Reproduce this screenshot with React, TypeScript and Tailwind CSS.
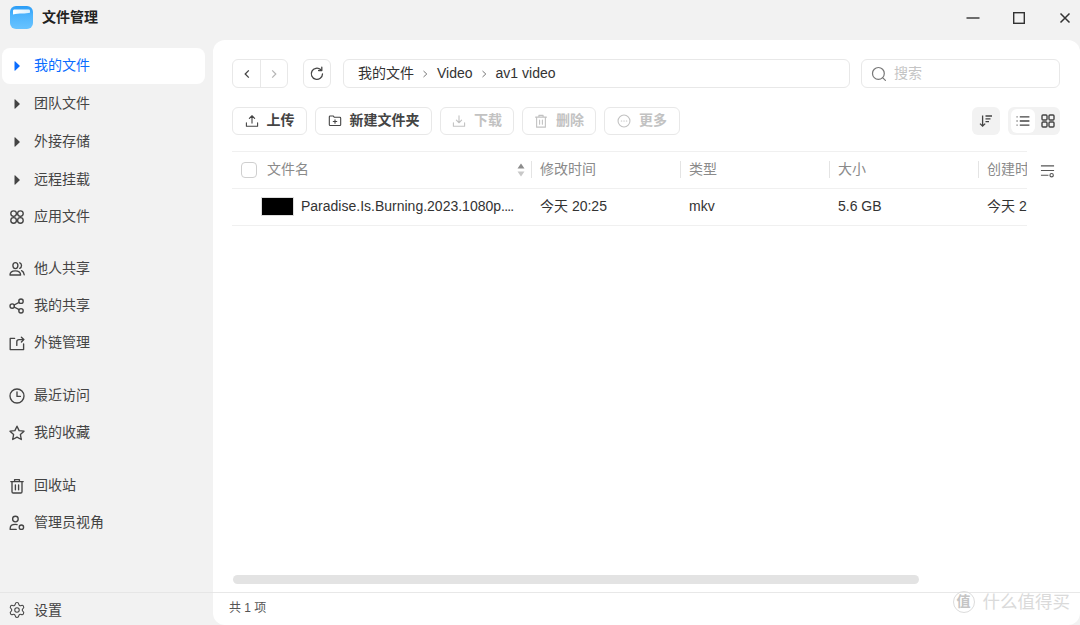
import type { ReactNode } from "react";
import { Settings } from "lucide-react";

type IconProps = { className?: string };

function Svg({ className, children, size = 16, sw = 1.35 }: IconProps & { children: ReactNode; size?: number; sw?: number }) {
  return (
    <svg
      width={size}
      height={size}
      viewBox="0 0 16 16"
      fill="none"
      stroke="currentColor"
      strokeWidth={sw}
      strokeLinecap="round"
      strokeLinejoin="round"
      className={`shrink-0 ${className ?? ""}`}
      aria-hidden
    >
      {children}
    </svg>
  );
}

const AppsIcon = () => (
  <Svg>
    <circle cx="4.6" cy="4.6" r="2.8" />
    <circle cx="11.4" cy="4.6" r="2.8" />
    <circle cx="4.6" cy="11.4" r="2.8" />
    <circle cx="11.4" cy="11.4" r="2.8" />
  </Svg>
);
const SharedIcon = () => (
  <Svg>
    <ellipse cx="6.4" cy="4.6" rx="2.5" ry="3" />
    <path d="M1 14c0-2.6 2.3-4.2 5.3-4.2S11.6 11.4 11.6 14H1Z" />
    <path d="M10.8 1.8c1.1.5 1.7 1.6 1.7 2.8s-.6 2.3-1.7 2.8" />
    <path d="M12.6 9.6c1.4.7 2.4 2.4 2.6 4.2" />
  </Svg>
);
const ShareIcon = () => (
  <Svg>
    <circle cx="12" cy="3.2" r="2.2" />
    <circle cx="3.2" cy="8" r="2.2" />
    <circle cx="12" cy="12.8" r="2.2" />
    <path d="M10.1 4.3 5.1 7M5.1 9l5 2.7" />
  </Svg>
);
const LinkIcon = () => (
  <Svg>
    <path d="M5.6 3.4H1.2v11.2h13.4V9" />
    <path d="M7.8 10.4V6.8c0-1.3.9-2.2 2.2-2.2h4.6" />
    <path d="M12.4 2.2 14.8 4.6 12.4 7" />
  </Svg>
);
const ClockIcon = () => (
  <Svg>
    <circle cx="8" cy="8" r="7" />
    <path d="M8 4v4.4h3.4" />
  </Svg>
);
const StarIcon = () => (
  <Svg>
    <path d="m8 1.2 2.1 4.4 4.9.6-3.6 3.4.9 4.9L8 12.2l-4.3 2.3.9-4.9L1 6.2l4.9-.6L8 1.2Z" />
  </Svg>
);
const TrashIcon = () => (
  <Svg>
    <path d="M1.8 3.6h12.4M5.6 3.4V1.6h4.8v1.8" />
    <path d="M3 3.6v10.2c0 .7.5 1.2 1.2 1.2h7.6c.7 0 1.2-.5 1.2-1.2V3.6" />
    <path d="M6.4 7v4.8M9.6 7v4.8" />
  </Svg>
);
const AdminIcon = () => (
  <Svg>
    <circle cx="6.4" cy="4" r="2.8" />
    <path d="M1.2 14.4v-1.2c0-2.4 2.4-3.8 5.2-3.8 .6 0 1.2 .1 1.7 .2M1.2 14.4h6" />
    <circle cx="12.4" cy="12.2" r="2.2" />
  </Svg>
);

function Caret({ className }: IconProps) {
  return (
    <svg width="6" height="10" viewBox="0 0 6 10" className={className} aria-hidden>
      <path d="M0.5 0.8v8.4a.5.5 0 0 0 .8.4l4.2-4.2a.5.5 0 0 0 0-.8L1.3.4a.5.5 0 0 0-.8.4Z" fill="currentColor" />
    </svg>
  );
}

const Chevron = () => (
  <span className="mx-[8px] text-[#777777]">
    <svg width="7" height="8" viewBox="0 0 7 8" aria-hidden>
      <path d="M1.5 1 4.8 4 1.5 7" fill="none" stroke="currentColor" strokeWidth="1" />
    </svg>
  </span>
);

function NavRow({ label, icon, caret, active }: { label: string; icon?: ReactNode; caret?: boolean; active?: boolean }) {
  return (
    <div
      className={`flex items-center pl-[10px] rounded-lg text-[14px] ${
        active ? "mt-px h-[36px] pb-px bg-white text-[#0a6cff]" : "h-[37px] text-[#444444]"
      }`}
    >
      <span className="flex w-[14px] justify-center mr-[10px] -ml-[2px] shrink-0">
        {caret ? <Caret /> : icon}
      </span>
      <span>{label}</span>
    </div>
  );
}

function ToolButton({ label, icon, disabled, w }: { label: string; icon: ReactNode; disabled?: boolean; w: string }) {
  return (
    <button
      className={`flex h-[28px] items-center justify-center gap-[8px] rounded-md border border-[#e8e8e8] pb-px text-[14px] font-semibold ${w} ${
        disabled ? "text-[#c2c2c2]" : "text-[#444444]"
      }`}
    >
      {icon}
      <span>{label}</span>
    </button>
  );
}

function HeaderCell({ label, w }: { label: string; w: string }) {
  return (
    <div className={`flex h-full items-center shrink-0 ${w}`}>
      <span className="h-[17px] w-px shrink-0 bg-[#e4e4e4]" />
      <span className="ml-[8px] whitespace-nowrap">{label}</span>
    </div>
  );
}

export default function App() {
  return (
    <div className="relative flex h-[625px] w-[1080px] flex-col overflow-hidden bg-[#f2f2f2] font-['Liberation_Sans','Noto_Sans_CJK_SC',sans-serif] text-[#333333]">
      <div className="flex h-[40px] shrink-0 items-center">
        <svg width="23" height="23" viewBox="0 0 23 23" className="ml-[10px] mt-[-5px]" aria-hidden>
          <defs>
            <linearGradient id="folderBlue" x1="0" y1="0" x2="0" y2="1">
              <stop offset="0" stopColor="#2a9cf6" />
              <stop offset="0.4" stopColor="#4db4fd" />
              <stop offset="1" stopColor="#68c3ff" />
            </linearGradient>
            <linearGradient id="folderTop" x1="0" y1="0" x2="1" y2="0">
              <stop offset="0" stopColor="#ffffff" />
              <stop offset="1" stopColor="#d8effe" />
            </linearGradient>
          </defs>
          <rect x="0" y="0" width="23" height="23" rx="6" fill="url(#folderBlue)" />
          <path d="M3 5c0-.8.6-1.4 1.4-1.4h14.2c.8 0 1.4.6 1.4 1.4v1.8c-4 1-11 .4-17 1.6V5Z" fill="url(#folderTop)" />
        </svg>
        <span className="ml-[9px] mt-[-6px] text-[14px] font-semibold text-[#222222]">文件管理</span>
        <div className="ml-auto mt-[-4px] flex items-center text-[#333333]">
          <svg width="14" height="14" viewBox="0 0 14 14" className="mr-[32px]" aria-hidden>
            <path d="M0.5 7h13" stroke="currentColor" strokeWidth="1.4" />
          </svg>
          <svg width="14" height="14" viewBox="0 0 14 14" className="mr-[32px]" aria-hidden>
            <rect x="1.7" y="1.7" width="10.6" height="10.6" fill="none" stroke="currentColor" strokeWidth="1.4" />
          </svg>
          <svg width="14" height="14" viewBox="0 0 14 14" className="mr-[8px]" aria-hidden>
            <path d="M2.5 2.5l9 9M11.5 2.5l-9 9" stroke="currentColor" strokeWidth="1.5" />
          </svg>
        </div>
      </div>

      <div className="flex min-h-0 flex-1">
        <aside className="flex w-[213px] shrink-0 flex-col">
          <div className="ml-[2px] mr-[8px] mt-[7px] flex flex-col">
            <div className="flex flex-col gap-px">
              <NavRow label="我的文件" caret active />
              <NavRow label="团队文件" caret />
              <NavRow label="外接存储" caret />
              <NavRow label="远程挂载" caret />
            </div>
            <NavRow label="应用文件" icon={<AppsIcon />} />
            <div className="mt-[15px] flex flex-col">
              <NavRow label="他人共享" icon={<SharedIcon />} />
              <NavRow label="我的共享" icon={<ShareIcon />} />
              <NavRow label="外链管理" icon={<LinkIcon />} />
            </div>
            <div className="mt-[16px] flex flex-col">
              <NavRow label="最近访问" icon={<ClockIcon />} />
              <NavRow label="我的收藏" icon={<StarIcon />} />
            </div>
            <div className="mt-[16px] flex flex-col">
              <NavRow label="回收站" icon={<TrashIcon />} />
              <NavRow label="管理员视角" icon={<AdminIcon />} />
            </div>
          </div>
          <div className="mt-auto flex h-[33px] items-center border-t border-[#e6e6e6] pl-[2px] pt-[2px]">
            <div className="flex h-full items-center pl-[10px] text-[14px] text-[#444444]">
              <span className="mr-[10px] -ml-[2px] flex w-[14px] justify-center">
                <Settings size={18} strokeWidth={1.4} className="shrink-0" />
              </span>
              <span>设置</span>
            </div>
          </div>
        </aside>

        <main className="flex min-w-0 flex-1 flex-col rounded-xl bg-white">
          <div className="flex min-h-0 flex-1 flex-col pl-[19px] pr-[20px] pt-[19px]">
            <div className="flex h-[29px] shrink-0 items-center">
              <div className="flex h-full w-[56px] items-center rounded-md border border-[#e8e8e8]">
                <span className="flex h-full w-[28px] items-center justify-center border-r border-[#e8e8e8] text-[#444444]">
                  <svg width="10" height="10" viewBox="0 0 10 10" aria-hidden>
                    <path d="M6.8 1.4 3.2 5l3.6 3.6" fill="none" stroke="currentColor" strokeWidth="1.3" />
                  </svg>
                </span>
                <span className="flex h-full flex-1 items-center justify-center text-[#b5b5b5]">
                  <svg width="10" height="10" viewBox="0 0 10 10" aria-hidden>
                    <path d="M3.2 1.4 6.8 5 3.2 8.6" fill="none" stroke="currentColor" strokeWidth="1.2" />
                  </svg>
                </span>
              </div>
              <div className="ml-[15px] flex h-full w-[28px] items-center justify-center rounded-md border border-[#e8e8e8] text-[#444444]">
                <svg width="16" height="16" viewBox="0 0 16 16" fill="none" stroke="currentColor" strokeWidth="1.3" aria-hidden>
                  <path d="M13.5 8A5.6 5.6 0 1 1 11.6 3.6" strokeLinecap="round" />
                  <path d="M12.8 1.2v3.3H9.6" strokeLinecap="round" strokeLinejoin="round" />
                </svg>
              </div>
              <div className="ml-[12px] flex h-full w-[507px] items-center rounded-md border border-[#e8e8e8] pl-[14px] text-[14px] text-[#333333]">
                <span>我的文件</span>
                <Chevron />
                <span>Video</span>
                <Chevron />
                <span>av1 video</span>
              </div>
              <div className="ml-[11px] flex h-full w-[199px] items-center rounded-md border border-[#e8e8e8] pl-[9px] text-[14px] text-[#c4c4c4]">
                <svg width="16" height="16" viewBox="0 0 16 16" fill="none" stroke="#777777" strokeWidth="1.2" aria-hidden>
                  <circle cx="7.4" cy="7.4" r="5.9" />
                  <path d="m11.8 11.8 2.6 2.6" strokeLinecap="round" />
                </svg>
                <span className="ml-[7px]">搜索</span>
              </div>
            </div>

            <div className="mt-[19px] flex h-[28px] shrink-0 items-center">
              <div className="flex items-center gap-[8px]">
                <ToolButton
                  w="w-[75px]"
                  label="上传"
                  icon={
                    <Svg size={14} sw={1.25}>
                      <path d="M8 10.4V2.4M5 5l3-3 3 3M1.6 10v4h12.8v-4" />
                    </Svg>
                  }
                />
                <ToolButton
                  w="w-[117px]"
                  label="新建文件夹"
                  icon={
                    <Svg size={14} sw={1.25}>
                      <path d="M1.5 3.2c0-.6.4-1 1-1h3.4l1.4 1.6h6.2c.6 0 1 .4 1 1v7.4c0 .6-.4 1-1 1H2.5c-.6 0-1-.4-1-1V3.2Z" />
                      <path d="M8 6.6v4M6 8.6h4" />
                    </Svg>
                  }
                />
                <ToolButton
                  disabled
                  w="w-[74px]"
                  label="下载"
                  icon={
                    <Svg size={14} sw={1.25}>
                      <path d="M8 2v8M5 7l3 3 3-3M1.6 10v4h12.8v-4" />
                    </Svg>
                  }
                />
                <ToolButton
                  disabled
                  w="w-[74px]"
                  label="删除"
                  icon={
                    <Svg size={14} sw={1.25}>
                      <path d="M1.8 3.6h12.4M5.6 3.4V1.6h4.8v1.8M3 3.6V15h10V3.6M6.4 7v4.8M9.6 7v4.8" />
                    </Svg>
                  }
                />
                <ToolButton
                  disabled
                  w="w-[76px]"
                  label="更多"
                  icon={
                    <Svg size={14} sw={1.25}>
                      <circle cx="8" cy="8" r="6.8" />
                      <path d="M4.9 8h.5M7.8 8h.5M10.7 8h.5" />
                    </Svg>
                  }
                />
              </div>
              <div className="ml-auto flex h-full items-center">
                <div className="flex h-full w-[28px] items-center justify-center rounded-md bg-[#f2f2f2] text-[#444444]">
                  <svg width="14" height="14" viewBox="0 0 14 14" fill="none" stroke="currentColor" strokeWidth="1.3" aria-hidden>
                    <path d="M3.6 1.5v10.6M1 9.6l2.6 2.6 2.6-2.6M6.5 2h6.5M6.5 4.8h5M6.5 7.6H10" />
                  </svg>
                </div>
                <div className="ml-[8px] flex h-full w-[52px] items-center rounded-md bg-[#f2f2f2] py-[2px] pl-[3px]">
                  <div className="flex h-full w-[24px] items-center justify-center rounded-md bg-white text-[#444444]">
                    <svg width="14" height="14" viewBox="0 0 14 14" fill="none" stroke="currentColor" strokeWidth="1.3" aria-hidden>
                      <path d="M.6 2.8h.9M.6 7h.9M.6 11.2h.9M3.8 2.8h9.6M3.8 7h9.6M3.8 11.2h9.6" />
                    </svg>
                  </div>
                  <div className="flex flex-1 items-center justify-center text-[#444444]">
                    <svg width="14" height="14" viewBox="0 0 14 14" fill="none" stroke="currentColor" strokeWidth="1.4" aria-hidden>
                      <rect x="1" y="1" width="5" height="5" rx="1" />
                      <rect x="8" y="1" width="5" height="5" rx="1" />
                      <rect x="1" y="8" width="5" height="5" rx="1" />
                      <rect x="8" y="8" width="5" height="5" rx="1" />
                    </svg>
                  </div>
                </div>
              </div>
            </div>

            <div className="mt-[16px] flex min-h-0 flex-1 items-start">
              <div className="w-[795px] shrink-0 overflow-hidden">
                <div className="flex h-[38px] items-center border-y border-[#f0f0f0] pb-px text-[14px] text-[#8a8a8a]">
                  <span className="ml-[9px] h-[16px] w-[16px] shrink-0 rounded-[4px] border border-[#cfcfcf]" />
                  <div className="ml-[10px] flex h-full w-[264px] shrink-0 items-center justify-between pr-[5px]">
                    <span>文件名</span>
                    <svg width="10" height="16" viewBox="0 0 10 16" aria-hidden>
                      <path d="M5 1.5 8.5 6.5h-7Z" fill="#8c8c8c" />
                      <path d="M5 14.5 1.5 9.5h7Z" fill="#c8c8c8" />
                    </svg>
                  </div>
                  <HeaderCell label="修改时间" w="w-[149px]" />
                  <HeaderCell label="类型" w="w-[149px]" />
                  <HeaderCell label="大小" w="w-[149px]" />
                  <HeaderCell label="创建时间" w="w-[70px]" />
                </div>
                <div className="flex h-[37px] items-center border-b border-[#f0f0f0] pb-px text-[14px] text-[#333333]">
                  <span className="ml-[29px] h-[19px] w-[33px] shrink-0 border border-[#dddddd] bg-black" />
                  <span className="ml-[7px] mr-[13px] w-[217px] shrink-0 whitespace-nowrap">
                    Paradise.Is.Burning.2023.1080p<span className="tracking-[-0.8px]">....</span>
                  </span>
                  <span className="w-[149px] shrink-0 pl-[9px]">今天 20:25</span>
                  <span className="w-[149px] shrink-0 pl-[9px]">mkv</span>
                  <span className="w-[149px] shrink-0 pl-[9px]">5.6 GB</span>
                  <span className="shrink-0 whitespace-nowrap pl-[9px]">今天 20:25</span>
                </div>
              </div>
              <svg width="15" height="15" viewBox="0 0 16 16" fill="none" stroke="#555555" strokeWidth="1.2" className="ml-[13px] mt-[12px] shrink-0" aria-hidden>
                <path d="M1 3h14M1 8h14M1 13h8" />
                <circle cx="12.4" cy="13" r="1.8" />
              </svg>
            </div>

            <div className="mb-[8px] ml-px h-[9px] w-[686px] shrink-0 rounded-full bg-[#e3e3e3]" />
          </div>
          <div className="flex h-[33px] shrink-0 items-center border-t border-[#e8e8e8] pb-[2px] pl-[16px] text-[12px] text-[#555555]">
            共 1 项
          </div>
        </main>
      </div>

      <div className="absolute bottom-[10px] right-[10px] flex items-center text-[#dadada]">
        <span className="mr-[8px] flex h-[22px] w-[22px] items-center justify-center rounded-full border border-[#dcdcdc] text-[14px] font-semibold text-[#c4c4c4]">
          值
        </span>
        <span className="text-[17.5px]">什么值得买</span>
      </div>
    </div>
  );
}
